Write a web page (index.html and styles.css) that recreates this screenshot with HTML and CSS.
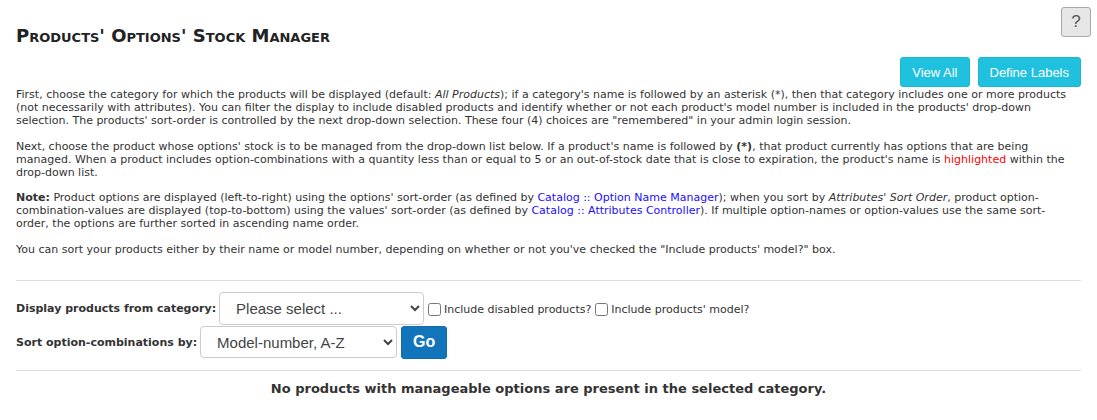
FILE: index.html
```html
<!DOCTYPE html>
<html>
<head>
<meta charset="utf-8">
<link rel="stylesheet" href="styles.css">
</head>
<body>
<div class="page">
  <div class="header">
    <h1 class="title">Products' Options' Stock Manager</h1>
    <button class="help-btn" type="button">?</button>
  </div>
  <div class="toolbar">
    <button class="btn btn-info" type="button">View All</button>
    <button class="btn btn-info" type="button">Define Labels</button>
  </div>
  <div class="instructions">
    <p>First, choose the category for which the products will be displayed (default: <i>All Products</i>); if a category's name is followed by an asterisk (*), then that category includes one or more products (not necessarily with attributes). You can filter the display to include disabled products and identify whether or not each product's model number is included in the products' drop-down selection. The products' sort-order is controlled by the next drop-down selection. These four (4) choices are "remembered" in your admin login session.</p>
    <p>Next, choose the product whose options' stock is to be managed from the drop-down list below. If a product's name is followed by <b>(*)</b>, that product currently has options that are being managed. When a product includes option-combinations with a quantity less than or equal to 5 or an out-of-stock date that is close to expiration, the product's name is <span class="hl">highlighted</span> within the drop-down list.</p>
    <p class="note"><b>Note:</b> Product options are displayed (left-to-right) using the options' sort-order (as defined by <a href="#">Catalog :: Option Name Manager</a>); when you sort by <i>Attributes' Sort Order</i>, product option-combination-values are displayed (top-to-bottom) using the values' sort-order (as defined by <a href="#">Catalog :: Attributes Controller</a>). If multiple option-names or option-values use the same sort-order, the options are further sorted in ascending name order.</p>
    <p>You can sort your products either by their name or model number, depending on whether or not you've checked the "Include products' model?" box.</p>
  </div>
  <hr class="rule rule-top">
  <form class="filters">
    <div class="row">
      <label class="lbl">Display products from category:</label>
      <select class="sel sel-cat"><option>Please select ...</option></select>
      <label class="chk"><input type="checkbox"> Include disabled products?</label>
      <label class="chk"><input type="checkbox"> Include products' model?</label>
    </div>
    <div class="row">
      <label class="lbl">Sort option-combinations by:</label>
      <select class="sel sel-sort"><option>Model-number, A-Z</option></select>
      <button class="btn btn-primary" type="button">Go</button>
    </div>
  </form>
  <hr class="rule">
  <p class="empty">No products with manageable options are present in the selected category.</p>
</div>
</body>
</html>
```

FILE: styles.css
```css
html, body {
  margin: 0;
  padding: 0;
  background: #fff;
}
.page {
  padding: 7px 16px 0 16px;
  font-family: "DejaVu Sans", Verdana, sans-serif;
  font-size: 11px;
  line-height: 13px;
  color: #333;
}
.header {
  display: flex;
  justify-content: space-between;
  align-items: flex-start;
}
.title {
  margin: 18px 0 0 0;
  font-size: 18px;
  line-height: 22px;
  font-weight: bold;
  font-variant: small-caps;
  color: #222;
}
.help-btn {
  width: 30px;
  height: 30px;
  margin-right: -10px;
  padding: 0;
  border: 1px solid #a8a8a8;
  border-radius: 3px;
  background: #e6e6e6;
  color: #555;
  font-family: "Liberation Sans", Arial, sans-serif;
  font-size: 17px;
}
.toolbar {
  display: flex;
  justify-content: flex-end;
  gap: 8px;
  margin-top: 10px;
  margin-bottom: 1px;
}
.btn {
  height: 30px;
  padding: 0 11px;
  border: 1px solid transparent;
  border-radius: 3px;
  font-family: "Liberation Sans", Arial, sans-serif;
  font-size: 13px;
  color: #fff;
}
.btn-info {
  background: #1fc1de;
  border-color: #1ab8d4;
}
.btn-primary {
  height: 33px;
  padding: 0 11px;
  background: #1275bb;
  border-color: #0f6cad;
  font-size: 16px;
  font-weight: bold;
}
.instructions p {
  margin: 0 0 12.5px 0;
}
.instructions p:last-child {
  margin-bottom: 0;
}
.instructions .note {
  padding-right: 30px;
}
.instructions a {
  color: #1a0dff;
  text-decoration: none;
}
.hl {
  color: #f00;
}
.rule {
  margin: 0;
  border: 0;
  border-top: 1px solid #ddd;
}
.rule-top {
  margin-top: 24px;
}
.filters {
  padding: 11px 0 11px 0;
}
.row {
  display: flex;
  align-items: center;
  gap: 4px;
}
.row + .row {
  margin-top: 1px;
}
.lbl {
  font-weight: bold;
  margin-right: -1px;
}
.sel {
  height: 33px;
  padding: 0 8px 0 12px;
  border: 1px solid #ccc;
  border-radius: 4px;
  background: #fff;
  color: #444;
  font-family: "Liberation Sans", Arial, sans-serif;
  font-size: 15px;
}
.sel-cat {
  width: 205px;
}
.sel-sort {
  width: 197px;
  height: 32px;
}
.chk {
  display: flex;
  align-items: center;
  gap: 3px;
  padding-top: 2px;
}
.chk input {
  margin: 0;
  width: 13px;
  height: 13px;
}
.empty {
  margin: 10px 0 0 0;
  text-align: center;
  font-weight: bold;
  font-size: 13px;
  line-height: 16px;
  color: #333;
}
```
